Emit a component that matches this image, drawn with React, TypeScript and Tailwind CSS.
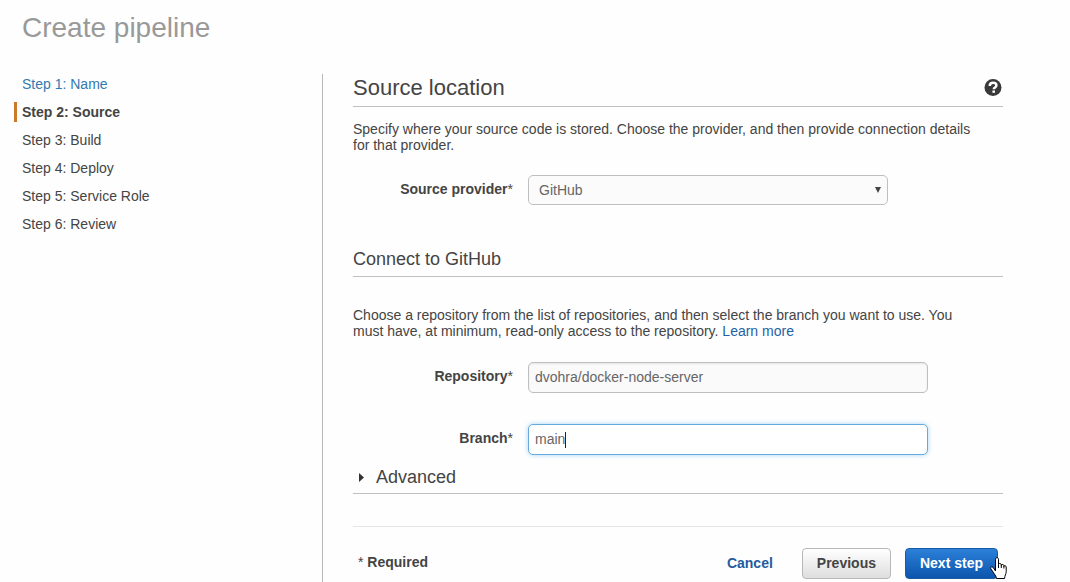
import React, { useState } from "react";

const steps = [
  { id: 1, name: "Name" },
  { id: 2, name: "Source" },
  { id: 3, name: "Build" },
  { id: 4, name: "Deploy" },
  { id: 5, name: "Service Role" },
  { id: 6, name: "Review" },
];

const currentStep = 2;

const Steps = () => (
  <nav className="w-[323px] shrink-0 border-r border-[#b8b8b8]">
    <ol className="flex flex-col gap-2">
      {steps.map((step) => {
        const title = `Step ${step.id}: ${step.name}`;
        if (step.id === currentStep) {
          return (
            <li
              key={step.id}
              aria-current="step"
              className="ml-[14px] border-l-3 border-[#cc7a29] pl-[5px] font-bold leading-5"
            >
              {title}
            </li>
          );
        }
        return (
          <li key={step.id} className="pl-[22px] leading-5">
            {step.id < currentStep ? (
              <a href="#name" className="text-[#3279b0]">{title}</a>
            ) : (
              title
            )}
          </li>
        );
      })}
    </ol>
  </nav>
);

const Field = ({ id, label, children }: { id: string; label: string; children: React.ReactNode }) => (
  <div className="flex items-start gap-[15px]">
    <label htmlFor={id} className="w-40 shrink-0 pt-[6px] text-right font-bold">
      {label}
      <span className="font-normal">*</span>
    </label>
    {children}
  </div>
);

const HelpIcon = () => (
  <svg width="18" height="18" viewBox="0 0 18 18" aria-hidden="true">
    <circle cx="9" cy="8.6" r="8.5" fill="#3a3a3a" />
    <path d="M5.7 7C5.8 4.7 7.2 3.8 9.1 3.8c1.9 0 3.3 1 3.3 2.7 0 2-2.6 2-2.6 3.7" fill="none" stroke="#fff" strokeWidth="2.5" />
    <rect x="8.4" y="11.5" width="2.6" height="2.3" fill="#fff" />
  </svg>
);

// Hand pointer over the primary button
const HandPointer = () => (
  <svg
    className="pointer-events-none absolute -right-[9px] top-[9px]"
    width="17"
    height="22"
    viewBox="0 0 17 22"
    aria-hidden="true"
  >
    <path
      d="M5.5 14V2.2C5.5.2 8.5.2 8.5 2.2v5.3c0-1.5 2.8-1.3 2.8.3v.6c0-1.4 2.6-1.2 2.6.4v.6c0-1.2 2.3-1 2.3.6v4.6c0 2.8-1.6 3.8-1.6 6.9H6.4c0-2.7-2.2-4.2-3.3-6.4L.8 11.8c-.9-1.6 1-2.8 2.3-1.4z"
      fill="#fff"
      stroke="#000"
      strokeLinejoin="round"
    />
    <path d="M8.5 7.5V11M11.3 8v3M13.9 9v2.5" fill="none" stroke="#000" />
  </svg>
);

const App = () => {
  const [provider, setProvider] = useState("GitHub");
  const [repository, setRepository] = useState("dvohra/docker-node-server");
  const [branch, setBranch] = useState("main");

  return (
    <div className="flex min-h-screen flex-col bg-[#fefefe] font-['Liberation_Sans',Arial,sans-serif] text-sm text-[#444]">
      <h1 className="mb-[30px] pl-[22px] pt-3 text-[28px] leading-8 text-[#999]">Create pipeline</h1>

      <div className="flex flex-1">
        <Steps />

        <main className="ml-[30px] min-w-0 max-w-[650px] flex-1 leading-4">
          <div className="flex justify-between border-b border-[#c0c0c0] pb-1">
            <h2 className="text-[22px] leading-7">Source location</h2>
            <button type="button" aria-label="Help" className="mr-px">
              <HelpIcon />
            </button>
          </div>
          <p className="mb-[22px] mt-[14px] pr-5">
            Specify where your source code is stored. Choose the provider, and then provide connection details for that
            provider.
          </p>
          <Field id="provider" label="Source provider">
            <div className="relative w-[360px]">
              <select
                id="provider"
                value={provider}
                onChange={(e) => setProvider(e.target.value)}
                className="block h-[30px] w-full appearance-none rounded-[5px] border border-[#bfbfbf] bg-[#fbfbfb] pl-[10px] text-[#666] outline-none"
              >
                <option>GitHub</option>
              </select>
              <svg
                className="pointer-events-none absolute right-[7px] top-3"
                width="6"
                height="6"
                viewBox="0 0 6 6"
                aria-hidden="true"
              >
                <path d="M0 0h6L3 6z" fill="#444" />
              </svg>
            </div>
          </Field>

          <h3 className="mt-[43px] border-b border-[#c0c0c0] pb-[6px] text-lg leading-[22px]">Connect to GitHub</h3>
          <p className="mb-[23px] mt-[30px] pr-5">
            Choose a repository from the list of repositories, and then select the branch you want to use. You must
            have, at minimum, read-only access to the repository.{" "}
            <a href="#learn-more" className="text-[#1f62a5]">Learn more</a>
          </p>
          <div className="flex flex-col gap-[31px]">
            <Field id="repository" label="Repository">
              <input
                id="repository"
                type="text"
                value={repository}
                onChange={(e) => setRepository(e.target.value)}
                className="h-[31px] w-[400px] rounded-[5px] border border-[#bfbfbf] bg-[#fafafa] px-[6px] pb-px text-[#666] shadow-[inset_0_1px_2px_#e4e4e4] outline-none"
              />
            </Field>
            <Field id="branch" label="Branch">
              <div className="relative w-[400px]">
                <input
                  id="branch"
                  type="text"
                  value={branch}
                  onChange={(e) => setBranch(e.target.value)}
                  className="block h-[31px] w-full rounded-[5px] border border-[#66a9dc] bg-white px-[6px] pb-px text-[#666] caret-transparent shadow-[0_0_5px_#a5d5f5] outline-none"
                />
                <span className="absolute left-[37px] top-2 h-4 w-px bg-[#222]" />
              </div>
            </Field>
          </div>

          <h3 className="mt-[11px] border-b border-[#c0c0c0] pb-[5px] text-lg leading-[22px]">
            <button type="button" aria-expanded="false" className="flex items-center gap-3 pl-[6px]">
              <svg width="5" height="10" viewBox="0 0 5 10" aria-hidden="true">
                <path d="M0 1l5 4.5L0 10z" fill="#333" />
              </svg>
              Advanced
            </button>
          </h3>

          <div className="mt-8 flex items-center border-t border-[#e6e6e6] pb-[3px] pl-[5px] pr-[5px] pt-[21px] font-bold">
            <p className="pb-[3px]">
              <span className="font-normal">*</span> Required
            </p>
            <a href="#cancel" className="ml-auto mr-[29px] pb-px text-[#1f5c9e]">Cancel</a>
            <button
              type="button"
              className="mr-[14px] h-[31px] rounded-[4px] border border-[#b8b8b8] bg-linear-to-b from-white to-[#dedede] px-[14px] pb-px"
            >
              Previous
            </button>
            <div className="relative">
              <button
                type="button"
                className="block h-[31px] rounded-[4px] border border-[#1a5ba8] bg-linear-to-b from-[#2b80d8] to-[#0c55ad] px-[14px] pb-px text-white"
              >
                Next step
              </button>
              <HandPointer />
            </div>
          </div>
        </main>
      </div>
    </div>
  );
};

export default App;
